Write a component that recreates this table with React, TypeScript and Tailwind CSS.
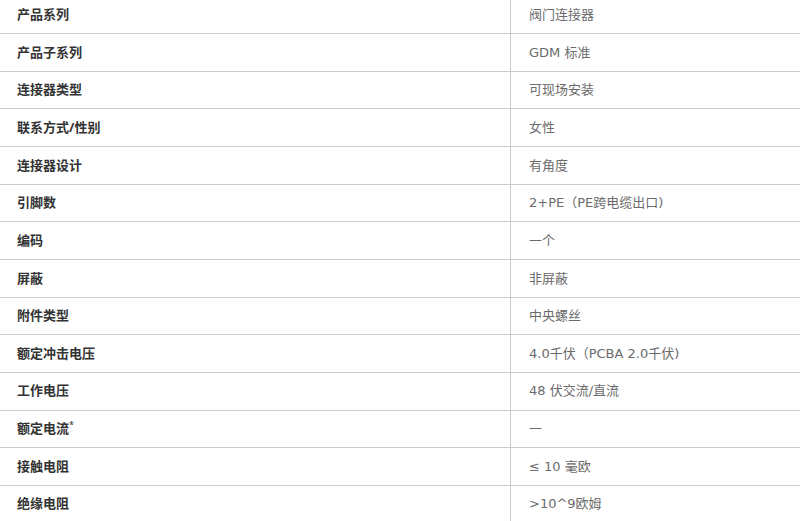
import React from "react";

const rows: [React.ReactNode, string][] = [
  ["产品系列", "阀门连接器"],
  ["产品子系列", "GDM 标准"],
  ["连接器类型", "可现场安装"],
  ["联系方式/性别", "女性"],
  ["连接器设计", "有角度"],
  ["引脚数", "2+PE（PE跨电缆出口)"],
  ["编码", "一个"],
  ["屏蔽", "非屏蔽"],
  ["附件类型", "中央螺丝"],
  ["额定冲击电压", "4.0千伏（PCBA 2.0千伏)"],
  ["工作电压", "48 伏交流/直流"],
  [
    <>
      额定电流<span className="font-normal text-[9px] align-top relative top-[-1px]">*</span>
    </>,
    "一",
  ],
  ["接触电阻", "≤ 10 毫欧"],
  ["绝缘电阻", ">10^9欧姆"],
];

export default function App() {
  return (
    <div
      className="w-[800px] h-[521px] overflow-hidden bg-white"
      style={{ fontFamily: '"Noto Sans", "Noto Sans CJK SC", sans-serif' }}
    >
      <div className="-mt-[3.67px] flex flex-col">
        {rows.map(([k, v], i) => (
          <div key={i} className="flex h-[37.67px] border-b border-[#cccccc]">
            <div className="w-[511px] shrink-0 border-r border-[#cccccc] pl-[17px] flex items-center text-[13px] font-bold text-[#333333]">
              <span>{k}</span>
            </div>
            <div
              className="flex-1 pl-[18px] flex items-center text-[13px] text-[#6b6b6b]"
              style={{ fontFamily: '"DejaVu Sans", "Noto Sans CJK SC", sans-serif' }}
            >
              {v}
            </div>
          </div>
        ))}
      </div>
    </div>
  );
}
